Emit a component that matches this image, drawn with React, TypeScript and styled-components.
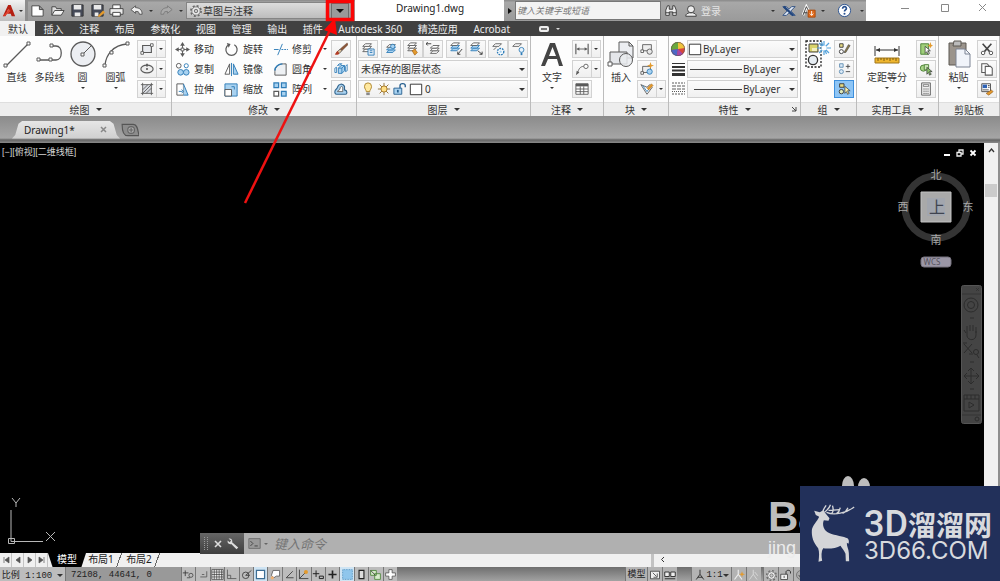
import React from "react";
import styled, { createGlobalStyle, css } from "styled-components";

const GlobalStyle = createGlobalStyle`
  * { box-sizing: border-box; }
  body {
    margin: 0;
    background: #000;
    font-family: "Noto Sans", "Noto Sans CJK SC", sans-serif;
    font-size: 10px;
    line-height: 14px;
    color: #333;
  }
  button, select, input { font: inherit; color: inherit; margin: 0; padding: 0; border: 0; background: none; }
  button { display: flex; align-items: center; justify-content: center; }
  svg { display: block; flex: none; }
`;

/* ---------- icons ---------- */

const G = "#5a5a5a";
const B = "#2f7db8";
const LB = "#a9d2f0";
const OR = "#e39a2d";

const sheet = (y: number, fill = "#fff", stroke = G) => (
  <path d={`M4 ${y + 3}L7 ${y}H14L11 ${y + 3}Z`} fill={fill} stroke={stroke} />
);
const sheets = (blue = false) => (
  <>
    {sheet(9, blue ? LB : "#fff", blue ? B : G)}
    {sheet(6, blue ? LB : "#fff", blue ? B : G)}
    {sheet(3, "#fff", G)}
  </>
);

const icons: Record<string, React.ReactNode> = {
  logo: <><path d="M1 14L7 1H10L15 14H11L10 11H6L9 8L7 6L4 14Z" fill="#b41f12" /><path d="M1 14L8 6L10 8L4 13Z" fill="#e2402c" /></>,
  fresh: <path d="M2 3H10L14 7V14H2ZM10 3V7H14" fill="#fff" stroke="#444" />,
  open: <><path d="M2 13V4H6L7 6H12V8" fill="#ddd" stroke="#444" /><path d="M2 13L5 8H15L12 13Z" fill="#f4f4f4" stroke="#444" /></>,
  save: <><path d="M2 2H14V14H2Z" fill="#454a58" stroke="#333" /><path d="M4 2H12V7H4ZM5 10H11V14H5Z" fill="#e9e9e9" /></>,
  saveas: <><path d="M2 2H14V14H2Z" fill="#454a58" stroke="#333" /><path d="M4 2H12V7H4ZM5 10H9V14H5Z" fill="#e9e9e9" /><path d="M8 14L14 8L16 10L10 15Z" fill={OR} /></>,
  print: <><path d="M4 2H12V7H4ZM4 10H12V14H4Z" fill="#fff" stroke="#444" /><path d="M1 6H15V12H1Z" fill="#ececec" stroke="#444" /><path d="M4 10H12V14H4Z" fill="#fff" stroke="#444" /></>,
  undo: <path d="M2 7L7 3V5C11 5 14 7 14 12H11C11 9 9 9 7 9V11Z" fill="#eee" stroke="#555" />,
  redo: <path d="M14 7L9 3V5C5 5 2 7 2 12H5C5 9 7 9 9 9V11Z" fill="#aaa" stroke="#7c7c7c" />,
  gear: <><circle cx="8" cy="8" r="5.800" fill="#eee" stroke="#6a6a6a" strokeWidth="2" strokeDasharray="2.300 2.255" /><circle cx="8" cy="8" r="4.800" fill="#eee" stroke="#666" /><circle cx="8" cy="8" r="2" fill="#ccc" stroke="#666" /></>,
  find: <><path d="M2 13V7L4 2H6V6H10V2H12L14 7V13H10V9H6V13Z" fill="#eee" stroke="#333" /><path d="M2 10H6M10 10H14" stroke="#333" /></>,
  user: <><path d="M2 14C2 11 4 11 6 10H10C12 11 14 11 14 14Z" fill="#eee" stroke="#333" /><circle cx="8" cy="6" r="4" fill="#eee" stroke="#333" /></>,
  exchange: <><path d="M1 3H5L8 6L11 3H15L10 8L15 13H11L8 10L5 13H1L6 8Z" fill="#e4ecf8" stroke="#24477d" /><path d="M2 3L13 13" stroke="#24477d" strokeWidth="2.5" /></>,
  connect: <><path d="M1 13L5 3L8 9" fill="none" stroke="#fff" strokeWidth="3" /><path d="M1 13L5 3L8 9M2 10H6" fill="none" stroke="#333" /><path d="M7 7H15V15H7Z" fill="#e06a1c" stroke="#a84808" /><path d="M11 8V13M9 11L11 13L13 11" stroke="#fff" fill="none" /></>,
  help: <><circle cx="8" cy="8" r="6.5" fill="#fff" stroke="#27508f" /><path d="M6 6C6 3 10.500 3.500 10 6C9.800 7.300 8 7.500 8 9" stroke="#27508f" fill="none" strokeWidth="1.800" /><circle cx="8" cy="11.500" r="1.100" fill="#27508f" /></>,
  rect: <><path d="M3 4H13V12H3Z" fill="#e8eaee" stroke={G} strokeWidth="1.300" /><path d="M1 11H4V14H1ZM12 2H15V5H12Z" fill="#fff" stroke={G} /></>,
  ellipse: <><ellipse cx="8" cy="8" rx="7" ry="4.500" fill="#eee" stroke={G} strokeWidth="1.300" /><circle cx="8" cy="8" r="1.200" fill={G} /><path d="M8 2V5" stroke={G} strokeWidth="2" /></>,
  hatch: <><path d="M3 3H13V13H3Z" fill="#d6d9df" /><path d="M3 1V15M13 1V15M1 3H15M1 13H15M3 9L9 3M3 13L13 3M7 13L13 7" stroke={G} /></>,
  move: <><path d="M8 3V13M3 8H13" stroke={G} /><path d="M8 0L10.500 4H5.500ZM8 16L10.500 12H5.500ZM0 8L4 5.500V10.500ZM16 8L12 5.500V10.500Z" fill={G} /><path d="M6.500 6.500H9.500V9.500H6.500Z" fill="#fff" stroke={G} /></>,
  rotate: <><path d="M5 3A6 6 0 1 0 11 3" fill="none" stroke={G} strokeWidth="1.300" /><path d="M3 1L7 2L5 6Z" fill={G} /></>,
  trim: <><path d="M1 8H6M9 8H11M12 8H14M15 8H16" stroke={B} /><path d="M5 14L10 2" stroke={B} /></>,
  copy: <><circle cx="4" cy="4" r="2.500" fill="#fff" stroke={G} /><circle cx="12" cy="4" r="2.200" fill="#fff" stroke={B} /><circle cx="6" cy="11" r="3" fill={LB} stroke={B} /><circle cx="12" cy="11" r="3" fill={LB} stroke={B} /></>,
  mirror: <><path d="M6 2V13H1Z" fill="#fff" stroke={G} /><path d="M10 2V13H15Z" fill={LB} stroke={B} /><path d="M8 1V15" stroke={B} /></>,
  fillet: <><path d="M2 14V10C2 5 6 2 11 2H14V14Z" fill="#eef1f4" stroke={G} /><path d="M2 9C2 5 6 2 10 2" fill="none" stroke={B} strokeWidth="1.500" /></>,
  stretch: <><path d="M2 2H9V14H2Z" fill="#fff" stroke={G} /><path d="M9 2L14 14H9" fill={LB} stroke={B} /><path d="M4 10H8M7 8L9 10L7 12" fill="none" stroke={B} /></>,
  scale: <><path d="M1 2H14V15H1Z" fill={LB} stroke={B} /><path d="M1 8H8V15H1Z" fill="#fff" stroke={G} /><path d="M8 5H11V8" fill="none" stroke={B} /></>,
  array: <><path d="M1 1H6V6H1ZM9 1H14V6H9ZM9 10H14V15H9Z" fill={LB} stroke={B} strokeWidth="1.300" /><path d="M1 10H6V15H1Z" fill="#fff" stroke={G} strokeWidth="1.300" /></>,
  erase: <><path d="M15 1L7 8L9 10L16 3Z" fill="#8b5638" stroke="#5b3824" strokeWidth=".5" /><path d="M7 8L9 10L6 13L3 12Z" fill="#dfc29b" stroke={G} /><path d="M1 14L4 10L6 13C5 15 2 15 1 14Z" fill="#b33a23" /></>,
  explode: <><path d="M5 7L8 4H12V10L9 13H5Z" fill={LB} stroke={B} /><path d="M5 7H9V13M9 7L12 4" stroke={B} fill="none" /><path d="M1 7L3 6V12H1ZM13 5L15 3V10L13 11ZM4 4L6 2H9L8 3Z" fill="#fff" stroke={B} /></>,
  offset: <><path d="M1 11C1 8 4 8 4 6C5 2 10 1 12 5V9C16 10 15 14 13 14H3C1 14 1 12 1 11Z" fill={LB} stroke="#33668f" strokeWidth="1.300" /><path d="M4 11C4 9 7 10 7 7C7 5 10 4 10 7V11Z" fill="#fff" stroke={G} /></>,
  layerProps: <><g transform="translate(-2 -1)">{sheets()}</g><path d="M8 8H15V15H8Z" fill="#dfeaf5" stroke={B} /><path d="M10 10H13M10 12H13" stroke={B} /></>,
  layerMatch: <><g transform="translate(-1 0)">{sheets(true)}</g><circle cx="10" cy="5" r="2.500" fill={LB} stroke={B} /></>,
  layerPaint: <><g transform="translate(-2 -2)">{sheets()}</g><path d="M7 10L10 8L13 12L10 15Z" fill={OR} stroke="#9b5a12" strokeWidth=".7" /></>,
  layerPrev: <><g transform="translate(1 1)">{sheets()}</g><path d="M0 2H6M2 0L0 2L2 4" fill="none" stroke="#333" /></>,
  layerIso: <><g transform="translate(-2 -2)">{sheets(true)}</g><path d="M15 8L10 14M10 11V14H13" stroke="#333" fill="none" /></>,
  layerUniso: <><g transform="translate(-2 -2)">{sheets(true)}</g><path d="M10 10L15 14M15 11V14H12" stroke="#333" fill="none" /></>,
  layerFreeze: <><g transform="translate(-2 -1)">{sheet(3)}</g><path d="M3 9L6 6" stroke={G} /><circle cx="11" cy="11" r="3.600" fill="#fff" stroke={B} strokeWidth="1.600" strokeDasharray="2 1" /><circle cx="11" cy="11" r="1.400" fill={LB} /></>,
  layerOff: <><g transform="translate(-2 -1)">{sheet(3)}</g><circle cx="12" cy="9" r="2.800" fill="#e8f3fc" stroke={B} /><path d="M11 12H13V15H11Z" fill={B} /></>,
  bulb: <><path d="M6 11C6 9 4 8 4 5A4 4 0 0 1 12 5C12 8 10 9 10 11Z" fill="#ffe9a0" stroke="#a77d20" /><path d="M6 12H10V15H6Z" fill="#888" /></>,
  sun: <><path d="M8 1V15M1 8H15M3 3L13 13M13 3L3 13" stroke="#8a6a2a" /><circle cx="8" cy="8" r="3.500" fill="#ffdf86" stroke="#a4731f" /></>,
  unlock: <><path d="M1 7H10V14H1Z" fill={LB} stroke="#245d8d" /><path d="M8 7V4C8 1 14 1 14 4V6" fill="none" stroke="#245d8d" strokeWidth="1.500" /><path d="M5.500 9V12" stroke="#245d8d" strokeWidth="2" /></>,
  swatch: <path d="M1.500 2.500H14.500V14.500H1.500Z" fill="#fff" stroke="#222" />,
  dim: <><path d="M1 2V14M15 2V14" stroke={G} strokeWidth="1.300" /><path d="M2 8H14" stroke={G} /><path d="M2 8L5 6V10ZM14 8L11 6V10Z" fill={G} /></>,
  leader: <><path d="M3 13C4 8 6 5 10 5" fill="none" stroke={G} /><path d="M1 15L2 10L5 12Z" fill={G} /><circle cx="12.500" cy="5" r="2.500" fill="#fff" stroke={G} /></>,
  table: <><path d="M1 2H15V14H1Z" fill="#fff" stroke={G} /><path d="M1 2H15V5H1Z" fill={G} /><path d="M1 8H15M1 11H15M6 5V14M10 5V14" stroke={G} /></>,
  blockCreate: <><path d="M3 3H13V10H3Z" fill="#eee" stroke={G} /><circle cx="11" cy="11" r="3" fill="#e8e8e8" stroke={G} /><path d="M1 9H4V12H1Z" fill="#fff" stroke={G} /></>,
  blockEdit: <><path d="M3 5H12V12H3Z" fill="#eee" stroke={G} /><path d="M1 11H4V14H1Z" fill="#fff" stroke={G} /><circle cx="11" cy="11" r="3" fill={LB} stroke={B} /><path d="M12 0L13 3L16 4L13 5L12 8L11 5L8 4L11 3Z" fill={OR} /></>,
  blockAttr: <><path d="M1 3L8 14L14 6L11 3L8 6Z" fill="#fff" stroke={G} /><path d="M3 4L8 11L10 8" stroke={B} fill="none" /><path d="M8 7L13 2L15 4L10 9Z" fill={OR} stroke="#8d5f21" strokeWidth=".5" /></>,
  wheel: <><circle cx="8" cy="8" r="7" fill="#d8463a" /><path d="M8 8L1 9A7 7 0 0 1 8 1Z" fill="#6aa83d" /><path d="M8 8V1A7 7 0 0 1 15 7Z" fill="#f1c33c" /><path d="M8 8L1 9A7 7 0 0 0 7 15Z" fill="#4c67c6" /><path d="M8 8L7 15A7 7 0 0 0 13 13Z" fill="#a646a8" /><circle cx="8" cy="8" r="6.600" fill="none" stroke="#555" strokeWidth=".6" /></>,
  lineweight: <><path d="M2 2.500H15" stroke="#333" /><path d="M2 6H15M2 9.500H15" stroke="#333" strokeWidth="2" /><path d="M2 13.500H15" stroke="#333" strokeWidth="3" /></>,
  linetypes: <><path d="M2 2H15M2 13H15" stroke={G} strokeDasharray="2 1" /><path d="M2 5H15M2 8H15" stroke={G} strokeDasharray="4 1" /><path d="M2 10.500H15" stroke={G} strokeDasharray="1 1" /></>,
  groupEdit: <><path d="M3 2H7V6H3Z" fill="#e8dc83" stroke="#333" /><circle cx="5" cy="11" r="2.300" fill="#fff" stroke="#333" /><path d="M8 12L13 3L15 4L10 12Z" fill="#8b7c4c" stroke="#333" strokeWidth=".6" /></>,
  groupAdd: <><path d="M3 2H7V6H3Z" fill="#dbeaf7" stroke="#5c8ab0" /><circle cx="5" cy="11" r="2.300" fill="#dbeaf7" stroke="#5c8ab0" /><path d="M10 5H15M12.500 2.500V7.500M10 11H15" stroke="#444" /></>,
  groupSel: <><path d="M3 2H8V6H3Z" fill="#e8dc83" stroke="#333" /><circle cx="5" cy="11" r="2.500" fill="#dfe9b9" stroke="#333" /><path d="M9 5V13L11 11L12 14L14 13L12 10H15Z" fill="#fff3aa" stroke="#333" strokeWidth=".8" /></>,
  quickSel: <><path d="M2 2H11V14H2Z" fill="#9fcf7a" stroke="#457c2e" /><path d="M7 5V13L9 11L10 14L12 13L10 10H13Z" fill="#fff" stroke="#333" strokeWidth=".8" /><path d="M13 0L14 3L16 4L14 5L13 7L12 5L10 4L12 3Z" fill={OR} /></>,
  selectAll: <><circle cx="5" cy="7" r="3.500" fill="#a8d488" stroke="#457c2e" /><path d="M6 3H11V9H6Z" fill="#cce7b7" stroke="#457c2e" /><path d="M9 6V14L11 12L12 15L14 14L12 11H15Z" fill="#8bc26a" stroke="#333" strokeWidth=".8" /></>,
  calc: <><path d="M3 1H13V15H3Z" fill="#eee" stroke={G} /><path d="M5 3H11V5H5Z" fill="#fff" stroke={G} strokeWidth=".8" /><path d="M5 8H11M5 10.500H11M5 13H11" stroke={G} strokeDasharray="1.500 .8" /></>,
  cut: <><path d="M3 2L11 11M13 2L5 11" stroke="#444" strokeWidth="1.800" /><circle cx="3.500" cy="12.500" r="2" fill="#fff" stroke="#444" /><circle cx="12.500" cy="12.500" r="2" fill="#fff" stroke="#444" /></>,
  copyDoc: <><path d="M2 2H8L10 4V12H2Z" fill="#fff" stroke={G} strokeWidth="1.200" /><path d="M6 5H12L14 7V15H6Z" fill="#fff" stroke={G} strokeWidth="1.200" /></>,
  matchProp: <><path d="M2 2H12V11H2Z" fill="#fff" stroke="#444" /><path d="M3 3H8V7H3Z" fill="#2e62b5" /><path d="M9 4H11M9 6H11M3 9H10" stroke="#444" /><path d="M7 13L13 9L15 11L10 15Z" fill={OR} stroke="#824d15" strokeWidth=".6" /></>,
  wrench: <path d="M3 2C6 1 8 4 7 6L14 12L12 14L6 8C3 9 1 6 2 4L4 6L6 4Z" fill="#ddd" />,
  prompt: <><path d="M1 2H15V14H1Z" fill="#999" stroke="#666" /><path d="M3 5L6 8L3 11M8 11H12" stroke="#333" fill="none" /></>,
  /* status bar toggles */
  infer: <><path d="M4 3V10M1 6H8" stroke="#333" /><circle cx="11" cy="9" r="2.500" fill="none" stroke="#444" /><path d="M6 12H10" stroke="#444" /></>,
  snap: <path d="M4 11H12V4M6 8H9" stroke="#555" fill="none" />,
  grid: <path d="M1 2H15V14H1ZM4 2V14M7 2V14M10 2V14M13 2V14M1 5H15M1 8H15M1 11H15" stroke="#333" fill="#eee" strokeWidth=".8" />,
  ortho: <path d="M3 2V13H14M3 9H7V13" stroke="#555" fill="none" />,
  polar: <><circle cx="7" cy="9" r="4" fill="none" stroke="#333" /><path d="M7 9L14 3M7 9H12" stroke="#333" /></>,
  osnap: <path d="M3 3H13V13H3Z" fill="#fff" stroke="#3d6e94" strokeWidth="1.500" />,
  osnap3: <><path d="M5 3H13V10H9L6 12L3 9Z" fill="#fff" stroke="#555" /><circle cx="4" cy="12" r="2" fill="#f1b171" /></>,
  otrack: <path d="M12 4L4 12H13" stroke="#333" fill="none" />,
  ducs: <><path d="M3 2V13H14M3 13L11 5" stroke="#333" fill="none" /><circle cx="11" cy="5" r="2.500" fill={OR} /></>,
  dyn: <path d="M5 3V11M1 7H9M9 10H14V13H9Z" stroke="#222" fill="none" strokeWidth="1.200" />,
  lwt: <path d="M8 3V13M3 8H13" stroke="#222" strokeWidth="2" />,
  transp: <path d="M2 2H14V14H2Z" fill="#8fc6ec" stroke="#3b83b5" strokeDasharray="1 1" />,
  quickProp: <path d="M5 3H11V13H5Z" fill="#ddd" stroke="#222" strokeWidth="1.400" />,
  cycling: <><path d="M2 3H9V9H2ZM7 7H14V14H7Z" fill="#d8ebcc" stroke="#458232" /><path d="M2 3L8 9" stroke="#333" /></>,
  monitor: <path d="M6 2H10V6H14V10H10V14H6V10H2V6H6Z" fill="#fff" stroke="#555" />,
  layout: <><path d="M2 3H14V13H2Z" fill="#eee" stroke="#333" /><path d="M5 5L10 10M6 11H11V6" stroke="#333" fill="none" /></>,
  views: <path d="M1 4H7V10H1ZM9 4H15V10H9ZM1 13H15" fill="#eee" stroke="#333" strokeWidth="1.300" />,
  person: <path d="M8 1V7L3 14M8 7L13 14M5 11H11" stroke="#333" fill="none" strokeWidth="1.300" />,
  personAuto: <><path d="M7 1V7L2 14M7 7L12 14" stroke="#eee" fill="none" strokeWidth="1.500" /><path d="M12 3L13 6L16 7L13 8L12 11L11 8L8 7L11 6Z" fill={OR} /></>,
  bolt: <path d="M7 1V7L2 14M7 7L12 14M9 4L13 9" stroke="#e2e2e2" fill="none" />,
  lock: <><path d="M1 7H10V14H1Z" fill="#eee" stroke="#333" /><path d="M8 7V4C8 1 14 1 14 4V6" fill="none" stroke="#333" strokeWidth="1.300" /><path d="M5.500 9V12" stroke="#333" /></>,
  target: <><circle cx="8" cy="8" r="6" fill="#aaa" stroke="#666" /><path d="M5 8L7 11L12 5" stroke="#333" fill="none" /></>,
  newTab: <><path d="M1 3H11C15 3 15 9 16 13H6C2 13 1 8 1 3Z" fill="#8c8c8c" stroke="#555" /><circle cx="9" cy="8" r="3" fill="#aaa" stroke="#666" /><path d="M7 8H11M9 6V10" stroke="#666" /></>,
};

const Icon = ({ name, size = 14 }: { name: string; size?: number }) => (
  <svg width={size} height={size} viewBox="0 0 16 16" fill="none" aria-hidden="true">{icons[name]}</svg>
);

const bigIcons: Record<string, React.ReactNode> = {
  line: <><path d="M3 26L25 4" stroke={G} strokeWidth="1.300" /><path d="M1 24H4V27H1ZM24 2H27V5H24Z" fill="#fff" stroke={G} /></>,
  pline: <><path d="M16 6H20C27 6 27 20 20 20H3" stroke={G} strokeWidth="1.300" /><path d="M14 4H17V7H14ZM1 18H4V21H1ZM13 18H16V21H13Z" fill="#fff" stroke={G} /></>,
  circle: <><circle cx="14" cy="14" r="12" fill="#eceef2" stroke={G} strokeWidth="1.300" /><path d="M14 14L22 6" stroke={G} /><path d="M12 13H15V16H12Z" fill="#fff" stroke={G} /></>,
  arc: <><path d="M3 25C4 15 11 5 25 4" stroke={G} strokeWidth="1.300" /><path d="M1 24H4V27H1ZM8 11H11V14H8ZM24 2H27V5H24Z" fill="#fff" stroke={G} /></>,
  text: <path d="M3 26L12 3H17L25 26H21L19 19H10L7 26ZM11 16H18L14.500 7Z" fill="#444" fillRule="evenodd" />,
  insert: <><path d="M12 2H22L26 6V18H12Z" fill="#eceef2" stroke={G} /><path d="M22 2V6H26" stroke={G} /><path d="M3 12H20V24H3Z" fill="#e4e6ea" stroke={G} /><circle cx="19" cy="20" r="6.500" fill="#e9ebef" fillOpacity=".85" stroke={G} /><path d="M1 22H5V26H1Z" fill="#fff" stroke={G} /></>,
  group: <><path d="M2 1H17V27H2Z" stroke="#222" strokeDasharray="2 1.500" strokeWidth="1.300" /><path d="M5 4H14V12H5Z" fill="#d9d36b" stroke="#444" /><path d="M8 8H13V11H8Z" fill="#f3f0c0" /><circle cx="9" cy="20" r="4.600" fill="#e6edf3" stroke="#333" strokeWidth="1.300" /><path d="M20 1V15M13 8H27M15 3L25 13M25 3L15 13M17.500 2L22.500 14" stroke="#54a3dc" strokeWidth="1.200" /><circle cx="20" cy="8" r="2.500" fill="#fff" /></>,
  measure: <><path d="M2 6V16M26 6V16M3 10H25" stroke="#333" /><path d="M3 10L7 8V12ZM25 10L21 8V12Z" fill="#333" /><path d="M2 18H26V23H2Z" fill="#eeb52e" stroke="#a0761a" /><path d="M5 18V21M8 18V20M11 18V21M14 18V20M17 18V21M20 18V20M23 18V21" stroke="#7d5c12" /></>,
  paste: <><path d="M4 3H21V25H4Z" fill="#9b948c" stroke="#5d5853" /><path d="M9 1H16V6H8Z" fill="#bbb" stroke="#5d5853" /><path d="M11 9H20L25 14V27H11Z" fill="#f1f4fa" stroke="#7c8494" /><path d="M20 9V14H25" stroke="#7c8494" /></>,
};
const BigIcon = ({ name }: { name: string }) => (
  <svg width="28" height="28" viewBox="0 0 28 28" fill="none" aria-hidden="true">{bigIcons[name]}</svg>
);

const Caret = styled.i<{ $w?: number; $color?: string }>`
  display: block;
  flex: none;
  width: 0;
  height: 0;
  border: ${(p) => p.$w ?? 2}px solid transparent;
  border-bottom: 0;
  border-top-color: ${(p) => p.$color ?? "#333"};
`;

/* ---------- page frame ---------- */

const Page = styled.div`
  position: relative;
  display: flex;
  flex-direction: column;
  min-height: 100vh;
  overflow: hidden;
`;

const TitleBar = styled.header`
  display: flex;
  height: 21px;
  background: #fff;
`;
const AppButton = styled.button`
  width: 28px;
  gap: 3px;
  background: linear-gradient(#f2f2f2, #bdbdbd);
  border-right: 3px solid #8d8d8d;
`;
const barFill = css`background: linear-gradient(#8f8f8f 0 1px, #a8a8a8 2px, #9a9a9a);`;
const QuickAccess = styled.div`
  display: flex;
  width: 327px;
  ${barFill}
`;
const QuickTools = styled.div`
  display: flex;
  width: 158px;
`;
const QuickButton = styled.button`flex: 2;`;
const QuickMore = styled.button`flex: 1;`;
const Workspace = styled.label`
  display: flex;
  align-items: center;
  width: 143px;
  height: 17px;
  margin-top: 2px;
  padding-left: 2px;
  background: linear-gradient(#dcdcdc, #bdbdbd);
  border: 1px solid #848484;
`;
const PlainSelect = styled.select`
  appearance: none;
  flex: 1;
  min-width: 0;
  height: 16px;
  outline: none;
`;
const CustomizeButton = styled.button`
  width: 18px;
  height: 16px;
  margin: 3px 0 0 2px;
  background: #9a9a9a;
  border: 1px solid #6c6c6c;
`;
const DocTitle = styled.h1`
  flex: 1;
  margin: 0;
  padding-left: 1px;
  text-align: center;
  font-size: 10px;
  font-weight: 400;
  line-height: 16px;
  color: #222;
`;
const InfoCenter = styled.div`
  display: flex;
  align-items: center;
  width: 362px;
  padding-right: 2px;
  ${barFill}
`;
const InfoButton = styled.button<{ $w: number }>`
  width: ${(p) => p.$w}px;
  height: 20px;
`;
const SearchBox = styled.input`
  width: 146px;
  height: 19px;
  padding-left: 1px;
  font-size: 9px;
  background: #f3f3f3;
  border: 1px solid #777;
  &::placeholder { color: #777; font-style: italic; opacity: 1; }
`;
const SignIn = styled.a`
  flex: 1;
  padding-left: 1px;
  color: #e4e4e4;
  text-decoration: none;
`;
const WindowControls = styled.div`
  display: flex;
  align-items: center;
  width: 134px;
  padding: 0 13px 6px 34px;
  justify-content: space-between;
  color: #888;
`;

const TabBar = styled.nav`
  display: flex;
  align-items: center;
  height: 15px;
  background: #414141;
`;
const TabList = styled.div`
  display: flex;
  justify-content: space-between;
  width: 517px;
  height: 15px;
`;
const Tab = styled.a<{ $active?: boolean }>`
  padding: 0 7px 0 8px;
  line-height: 16px;
  white-space: nowrap;
  text-decoration: none;
  color: ${(p) => (p.$active ? "#333" : "#ededed")};
  background: ${(p) => (p.$active ? "#f1f1f1" : "none")};
`;
const RibbonToggle = styled.button`
  gap: 7px;
  margin-left: 22px;
`;
const TogglePill = styled.span`
  width: 10px;
  height: 6px;
  border: 2px solid #eee;
  border-radius: 2px;
  background: #777;
`;

/* ---------- ribbon ---------- */

const Ribbon = styled.section`
  display: grid;
  grid-template-columns: 172fr 185fr 174fr 73fr 65fr 132fr 56fr 82fr 61fr;
  height: 80px;
  background: #fdfdfd;
`;
const PanelBox = styled.section`
  display: flex;
  flex-direction: column;
  border-right: 1px solid #bcbcbc;
  min-width: 0;
`;
const PanelBody = styled.div<{ $wide?: boolean }>`
  display: flex;
  flex: 1;
  justify-content: space-between;
  padding: 4px ${(p) => (p.$wide ? 5 : 2)}px 0 ${(p) => (p.$wide ? 0 : 1)}px;
`;
const PanelTitle = styled.h2`
  display: flex;
  align-items: center;
  justify-content: center;
  gap: 6px;
  position: relative;
  height: 14px;
  margin: 0;
  font-size: 10px;
  font-weight: 400;
  line-height: 12px;
  background: #ededed;
  border-top: 1px solid #dedede;
`;
const Launcher = styled.button`
  position: absolute;
  right: 3px;
  top: 3px;
`;
const Panel = ({ title, caret = true, launcher, wide, children }: {
  title: string; caret?: boolean; launcher?: boolean; wide?: boolean; children: React.ReactNode;
}) => (
  <PanelBox>
    <PanelBody $wide={wide}>{children}</PanelBody>
    <PanelTitle>
      {title}
      {caret && <Caret $w={3} />}
      {launcher && (
        <Launcher aria-label={title}>
          <svg width="6" height="6" viewBox="0 0 6 6" fill="none"><path d="M1 1L5 5M5 1V5H1" stroke="#444" /></svg>
        </Launcher>
      )}
    </PanelTitle>
  </PanelBox>
);

const BigRow = styled.div`display: flex;`;
const BigButtonBox = styled.button<{ $w: number }>`
  flex-direction: column;
  justify-content: flex-start;
  width: ${(p) => p.$w}px;
  white-space: nowrap;
`;
const BigLabel = styled.span`
  margin: 2px 0;
  line-height: 15px;
`;
const Big = ({ icon, label, caret, w = 33 }: { icon: string; label: string; caret?: boolean; w?: number }) => (
  <BigButtonBox $w={w}>
    <BigIcon name={icon} />
    <BigLabel>{label}</BigLabel>
    {caret && <Caret />}
  </BigButtonBox>
);

const Stack = styled.div`
  display: flex;
  flex-direction: column;
  gap: 2px;
`;
const Group = styled.div`display: flex;`;
const SmallButton = styled.button<{ $active?: boolean }>`
  width: 20px;
  height: 18px;
  background: ${(p) => (p.$active ? "#8ec5f5" : "linear-gradient(#fbfbfb, #efefef)")};
  border: 1px solid ${(p) => (p.$active ? "#3d8fdc" : "#d2d2d2")};
`;
const SplitArrow = styled(SmallButton)`
  width: 9px;
  border-left: 0;
`;
const Small = ({ icon, split, active }: { icon: string; split?: boolean; active?: boolean }) => (
  <Group>
    <SmallButton aria-label={icon} $active={active}><Icon name={icon} /></SmallButton>
    {split && <SplitArrow aria-label={`${icon} menu`}><Caret /></SplitArrow>}
  </Group>
);

const ModifyGrid = styled.div`
  display: grid;
  grid-template-columns: 49px 49px 54px;
  grid-template-rows: repeat(3, 18px);
  row-gap: 2px;
  padding-left: 3px;
`;
const ToolButton = styled.button`
  justify-content: flex-start;
  gap: 4px;
  white-space: nowrap;
`;
const ToolCaret = styled.span`margin-left: auto;`;

const LayerBody = styled.div`
  display: flex;
  flex: 1;
  flex-direction: column;
  gap: 2px;
`;
const LayerRow = styled.div`
  display: flex;
  justify-content: space-between;
`;
const Combo = styled.label`
  display: flex;
  flex: 1;
  align-items: center;
  gap: 2px;
  height: 18px;
  max-height: 18px;
  padding: 0 2px 0 2px;
  background: linear-gradient(#fbfbfb, #f0f0f0);
  border: 1px solid #d0d0d0;
`;
const PropRow = styled.div`
  display: flex;
  align-items: center;
  gap: 1px;
  height: 18px;
`;
const PropCombo = styled(Combo)`
  gap: 1px;
  padding-left: 0;
`;
const PropSelect = styled(PlainSelect)<{ $end?: boolean }>`
  flex: ${(p) => (p.$end ? "0 0 45px" : "1")};
`;
const LineSample = styled.span<{ $short?: boolean }>`
  flex: 1;
  height: 1px;
  margin-left: ${(p) => (p.$short ? 6 : 2)}px;
  background: #444;
`;

/* ---------- document area ---------- */

const FileTabs = styled.nav`
  display: flex;
  align-items: center;
  height: 27px;
  padding-left: 12px;
  gap: 1px;
  background: linear-gradient(#8b8b8b, #a5a5a5 22px, #666 24px, #8a8a8a);
`;
const FileTab = styled.div`
  display: flex;
  align-items: center;
  justify-content: space-between;
  width: 108px;
  height: 18px;
  padding: 0 13px 0 12px;
  background: linear-gradient(#e6e6e6, #cfcfcf);
  clip-path: polygon(0 100%, 3% 80%, 6% 18%, 10% 0, 90% 0, 94% 18%, 97% 80%, 100% 100%);
`;
const FileLink = styled.a`
  color: #222;
  text-decoration: none;
`;

const Workarea = styled.main`
  position: relative;
  display: flex;
  flex: 1;
  min-height: 300px;
  background: #000;
`;
const Model = styled.div`
  position: relative;
  flex: 1;
`;
const ViewLabel = styled.div`
  padding: 2px 2px;
  font-family: "Liberation Sans", "Noto Sans CJK SC", sans-serif;
  font-size: 9px;
  color: #d4d4d4;
`;
const DocControls = styled.div`
  position: absolute;
  right: 7px;
  top: 6px;
  display: flex;
  gap: 5px;
`;
const ViewCube = styled.svg`
  position: absolute;
  right: 10px;
  top: 22px;
`;
const NavBar = styled.svg`
  position: absolute;
  right: 2px;
  top: 142px;
`;
const Ucs = styled.svg`
  position: absolute;
  left: 5px;
  bottom: 4px;
`;
const VScroll = styled.div`
  display: flex;
  flex-direction: column;
  align-items: center;
  width: 16px;
  padding-top: 5px;
  background: #f0f0f0;
  border-right: 2px solid #8e8e8e;
`;
const VThumb = styled.div`
  width: 12px;
  height: 13px;
  margin-top: 31px;
  background: #cbcbcb;
`;
const CommandLine = styled.form`
  position: absolute;
  left: 200px;
  right: 16px;
  bottom: -1px;
  display: flex;
  height: 21px;
  background: #b0b0b0;
`;
const CommandGrip = styled.div`
  display: flex;
  align-items: center;
  justify-content: space-between;
  width: 44px;
  padding: 0 4px 0 3px;
  background: linear-gradient(#666, #3e3e3e);
`;
const CommandInput = styled.input`
  flex: 1;
  padding-left: 6px;
  font-size: 13px;
  font-style: italic;
  outline: none;
  &::placeholder { color: #757575; opacity: 1; }
`;
const CommandPrompt = styled.button`
  gap: 3px;
  padding-left: 4px;
`;

const LayoutBar = styled.div`
  display: flex;
  height: 14px;
  background: #f0f0f0;
`;
const LayoutNav = styled.button`
  width: 12px;
  border-right: 1px solid #c4c4c4;
`;
const LayoutTab = styled.a<{ $active?: boolean }>`
  width: 38px;
  padding-right: ${(p) => (p.$active ? 0 : 8)}px;
  text-align: center;
  white-space: nowrap;
  line-height: 13px;
  text-decoration: none;
  color: ${(p) => (p.$active ? "#fff" : "#222")};
  background: ${(p) => (p.$active ? "#000" : "linear-gradient(110deg, transparent 33px, #666 33px 34px, transparent 34px)")};
  clip-path: ${(p) => (p.$active ? "polygon(0 0, 100% 0, 88% 100%, 12% 100%)" : "none")};
`;
const HScroll = styled.div`
  width: 349px;
  margin-left: auto;
  padding-left: 6px;
  border-left: 3px solid #c2c2c2;
  line-height: 12px;
`;

const StatusBar = styled.footer`
  display: flex;
  height: 14px;
  background: linear-gradient(#6e6e6e, #a2a2a2);
  font-family: "Liberation Mono", "Noto Sans CJK SC", monospace;
  font-size: 9px;
  color: #222;
`;
const Scale = styled.button`
  width: 66px;
  gap: 5px;
  padding-top: 3px;
  background: #bdbdbd;
  border-right: 1px solid #777;
  white-space: nowrap;
`;
const Coords = styled.output`
  width: 115px;
  padding-left: 5px;
  line-height: 16px;
  white-space: pre;
  background: #999;
`;
const Toggles = styled.div`
  display: flex;
  width: 216px;
`;
const Toggle = styled.button<{ $on?: boolean }>`
  flex: 1;
  background: ${(p) => (p.$on ? "#cfe4f3" : "#bcbcbc")};
  border-left: 1px solid #777;
`;
const StatusRight = styled.div`
  display: flex;
  width: 375px;
  margin-left: auto;
`;
const StatusButton = styled.button<{ $w?: number; $ml?: number }>`
  width: ${(p) => p.$w ?? 15}px;
  margin-left: ${(p) => p.$ml ?? 0}px;
  padding-top: 2px;
  background: #b3b3b3;
  border-left: 1px solid #777;
`;

/* ---------- overlays ---------- */

const Annotation = styled.svg`
  position: absolute;
  left: 240px;
  top: 0;
  pointer-events: none;
`;
const Watermark = styled.div`
  position: absolute;
  right: 130px;
  bottom: 22px;
  width: 102px;
  font-family: "Liberation Sans", sans-serif;
  color: #bdbdbd;
`;
const Paw = styled.svg`
  margin-left: 72px;
`;
const WaterName = styled.div`
  font-size: 42px;
  font-weight: 700;
  line-height: 40px;
`;
const WaterSite = styled.div`
  font-size: 18px;
  line-height: 22px;
  color: #ececec;
`;
const Brand = styled.aside`
  position: absolute;
  right: 0;
  bottom: 0;
  display: flex;
  gap: 8px;
  width: 200px;
  height: 95px;
  padding: 17px 8px 0 9px;
  background: #22305a;
  color: #d8dade;
`;
const BrandText = styled.div`
  padding-top: 4px;
  white-space: nowrap;
`;
const BrandName = styled.div`
  display: flex;
  align-items: center;
  height: 34px;
  font-family: "Noto Sans CJK SC", sans-serif;
  font-size: 28px;
  font-weight: 700;
  line-height: 34px;
`;
const BrandLatin = styled.span`
  font-family: Roboto, "Liberation Sans", sans-serif;
  font-size: 36px;
  font-weight: 500;
`;
const BrandSite = styled.div`
  font-family: Inter, sans-serif;
  font-size: 24px;
  line-height: 20px;
`;

const tabs = ["默认", "插入", "注释", "布局", "参数化", "视图", "管理", "输出", "插件", "Autodesk 360", "精选应用", "Acrobat"];
const modifyTools = [
  ["move", "移动"], ["rotate", "旋转"], ["trim", "修剪"],
  ["copy", "复制"], ["mirror", "镜像"], ["fillet", "圆角"],
  ["stretch", "拉伸"], ["scale", "缩放"], ["array", "阵列"],
];
const toggles = ["infer", "snap", "grid", "ortho", "polar", "osnap", "osnap3", "otrack", "ducs", "dyn", "lwt", "transp", "quickProp", "cycling", "monitor"];
const activeToggles = ["osnap", "transp"];

export default function App() {
  return (
    <Page>
      <GlobalStyle />
      <TitleBar>
        <AppButton aria-label="menu"><Icon name="logo" size={14} /><Caret /></AppButton>
        <QuickAccess>
          <QuickTools>
            {["fresh", "open", "save", "saveas", "print", "undo"].map((n) => (
              <QuickButton key={n} aria-label={n}><Icon name={n} size={15} /></QuickButton>
            ))}
            <QuickMore aria-label="undo list"><Caret /></QuickMore>
            <QuickButton aria-label="redo"><Icon name="redo" size={15} /></QuickButton>
            <QuickMore aria-label="redo list"><Caret /></QuickMore>
          </QuickTools>
          <Workspace>
            <Icon name="gear" />
            <PlainSelect aria-label="workspace"><option>草图与注释</option></PlainSelect>
          </Workspace>
          <CustomizeButton aria-label="customize"><Caret $w={4} $color="#111" /></CustomizeButton>
        </QuickAccess>
        <DocTitle>Drawing1.dwg</DocTitle>
        <InfoCenter>
          <InfoButton $w={11} aria-label="expand">
            <svg width="4" height="6" viewBox="0 0 4 6"><path d="M0 0L4 3L0 6Z" fill="#111" /></svg>
          </InfoButton>
          <SearchBox aria-label="search" placeholder="键入关键字或短语" />
          <InfoButton $w={20} aria-label="find"><Icon name="find" /></InfoButton>
          <InfoButton $w={19} aria-label="account"><Icon name="user" /></InfoButton>
          <SignIn href="#">登录</SignIn>
          <InfoButton $w={10} aria-label="account menu"><Caret /></InfoButton>
          <InfoButton $w={22} aria-label="exchange"><Icon name="exchange" /></InfoButton>
          <InfoButton $w={18} aria-label="connect"><Icon name="connect" /></InfoButton>
          <InfoButton $w={10} aria-label="connect menu"><Caret /></InfoButton>
          <InfoButton $w={32} aria-label="help"><Icon name="help" size={15} /></InfoButton>
          <Caret />
        </InfoCenter>
        <WindowControls>
          <button aria-label="minimize"><svg width="10" height="10"><path d="M1 5.500H9" stroke="#888" /></svg></button>
          <button aria-label="maximize"><svg width="9" height="9"><path d="M1.500 1.500H8.500V8.500H1.500Z" stroke="#888" fill="none" /></svg></button>
          <button aria-label="close"><svg width="9" height="9"><path d="M1 1L8 8M8 1L1 8" stroke="#888" /></svg></button>
        </WindowControls>
      </TitleBar>

      <TabBar>
        <TabList>
          {tabs.map((t, i) => <Tab key={t} href="#" $active={i === 0}>{t}</Tab>)}
        </TabList>
        <RibbonToggle aria-label="ribbon display"><TogglePill /><Caret $color="#ddd" /></RibbonToggle>
      </TabBar>

      <Ribbon>
        <Panel title="绘图" wide>
          <BigRow>
            <Big icon="line" label="直线" />
            <Big icon="pline" label="多段线" />
            <Big icon="circle" label="圆" caret />
            <Big icon="arc" label="圆弧" caret />
          </BigRow>
          <Stack>
            <Small icon="rect" split />
            <Small icon="ellipse" split />
            <Small icon="hatch" split />
          </Stack>
        </Panel>
        <Panel title="修改" wide>
          <ModifyGrid>
            {modifyTools.map(([icon, label], i) => (
              <ToolButton key={icon}>
                <Icon name={icon} size={15} />{label}
                {i % 3 === 2 && <ToolCaret><Caret /></ToolCaret>}
              </ToolButton>
            ))}
          </ModifyGrid>
          <Stack>
            <Small icon="erase" />
            <Small icon="explode" />
            <Small icon="offset" />
          </Stack>
        </Panel>
        <Panel title="图层">
          <LayerBody>
            <LayerRow>
              <Small icon="layerProps" />
              <Small icon="layerMatch" />
              <Group><Small icon="layerPaint" /><Small icon="layerPrev" /></Group>
              <Group><Small icon="layerIso" /><Small icon="layerUniso" /></Group>
              <Group><Small icon="layerFreeze" /><Small icon="layerOff" /></Group>
            </LayerRow>
            <Combo>
              <PlainSelect aria-label="layer state"><option>未保存的图层状态</option></PlainSelect>
              <Caret $w={3} />
            </Combo>
            <Combo>
              <Icon name="bulb" /><Icon name="sun" /><Icon name="unlock" /><Icon name="swatch" />
              <PlainSelect aria-label="layer"><option>0</option></PlainSelect>
              <Caret $w={3} />
            </Combo>
          </LayerBody>
        </Panel>
        <Panel title="注释">
          <Big icon="text" label="文字" caret w={40} />
          <Stack>
            <Small icon="dim" split />
            <Small icon="leader" split />
            <Small icon="table" />
          </Stack>
        </Panel>
        <Panel title="块">
          <Big icon="insert" label="插入" w={32} />
          <Stack>
            <Small icon="blockCreate" />
            <Small icon="blockEdit" />
            <Small icon="blockAttr" split />
          </Stack>
        </Panel>
        <Panel title="特性" launcher>
          <LayerBody>
            <PropRow>
              <Icon name="wheel" size={16} />
              <PropCombo>
                <Icon name="swatch" />
                <PropSelect aria-label="color"><option>ByLayer</option></PropSelect>
                <Caret $w={3} />
              </PropCombo>
            </PropRow>
            <PropRow>
              <Icon name="lineweight" size={16} />
              <PropCombo>
                <LineSample />
                <PropSelect $end aria-label="lineweight"><option>ByLayer</option></PropSelect>
                <Caret $w={3} />
              </PropCombo>
            </PropRow>
            <PropRow>
              <Icon name="linetypes" size={16} />
              <PropCombo>
                <LineSample $short />
                <PropSelect $end aria-label="linetype"><option>ByLayer</option></PropSelect>
                <Caret $w={3} />
              </PropCombo>
            </PropRow>
          </LayerBody>
        </Panel>
        <Panel title="组">
          <Big icon="group" label="组" w={32} />
          <Stack>
            <Small icon="groupEdit" />
            <Small icon="groupAdd" />
            <Small icon="groupSel" active />
          </Stack>
        </Panel>
        <Panel title="实用工具">
          <Big icon="measure" label="定距等分" caret w={58} />
          <Stack>
            <Small icon="quickSel" />
            <Small icon="selectAll" />
            <Small icon="calc" />
          </Stack>
        </Panel>
        <Panel title="剪贴板" caret={false}>
          <Big icon="paste" label="粘贴" caret w={38} />
          <Stack>
            <Small icon="cut" />
            <Small icon="copyDoc" />
            <Small icon="matchProp" />
          </Stack>
        </Panel>
      </Ribbon>

      <FileTabs>
        <FileTab>
          <FileLink href="#">Drawing1*</FileLink>
          <button aria-label="close tab"><svg width="7" height="7"><path d="M1 1L6 6M6 1L1 6" stroke="#888" strokeWidth="1.500" /></svg></button>
        </FileTab>
        <button aria-label="new tab"><Icon name="newTab" size={18} /></button>
      </FileTabs>

      <Workarea>
        <Model>
          <ViewLabel>[−][俯视][二维线框]</ViewLabel>
          <DocControls>
            <button aria-label="minimize drawing"><svg width="8" height="8"><path d="M1 6H7" stroke="#fff" strokeWidth="2" /></svg></button>
            <button aria-label="restore drawing"><svg width="8" height="8"><path d="M1 3.500H5V7H1ZM3 3V1H7V5H5" stroke="#eee" fill="none" strokeWidth="1.300" /></svg></button>
            <button aria-label="close drawing"><svg width="8" height="8"><path d="M1.500 1.500L6.500 6.500M6.500 1.500L1.500 6.500" stroke="#fff" strokeWidth="1.800" /></svg></button>
          </DocControls>
          <ViewCube width="78" height="106" viewBox="0 0 78 106" fontSize="11" textAnchor="middle" fill="#a8a8a8">
            <circle cx="40" cy="42" r="31" fill="none" stroke="#343434" strokeWidth="7" />
            <path d="M25 27H55V57H25Z" fill="#a9a9a9" stroke="#c2c2c2" />
            <path d="M31 33H49V51H31Z" fill="#a2a6ae" />
            <text x="41" y="48" fontSize="16" fill="#3f4450">上</text>
            <text x="40" y="14">北</text>
            <text x="40" y="79">南</text>
            <text x="7" y="46">西</text>
            <text x="72" y="46">东</text>
            <rect x="25" y="92" width="30" height="10" rx="3" fill="#9b97a6" stroke="#77737f" />
            <text x="36" y="100" fontSize="8" fill="#56535e">WCS</text>
          </ViewCube>
          <NavBar width="21" height="139" viewBox="0 0 21 139" fill="none" stroke="#2c2c2c">
            <rect x=".5" y=".5" width="20" height="138" rx="2" fill="#444" stroke="#555" />
            <path d="M15 3L18 6M18 3L15 6M1 9H20M1 130H20" strokeWidth=".6" />
            <circle cx="10" cy="20" r="7" /><circle cx="10" cy="20" r="3.500" />
            <path d="M9 33H13M9 77H13M9 104H13" />
            <path d="M5 48L3 45M6 47V41M9 46V40M12 46V40M15 48V42M6 47V51C7 56 15 56 15 50V46" />
            <path d="M3 59L11 68M11 59L3 68M2 58H6M8 69H12" /><circle cx="15" cy="67" r="2.500" /><path d="M16 70L18 73" />
            <path d="M10 83V99M3 91H18M7 86L10 83L13 86M7 96L10 99L13 96M6 88L3 91L6 94M15 88L18 91L15 94" />
            <path d="M3 110H18V126H3ZM3 114H18M6 110V114M10 110V114M14 110V114M8 117L13 120L8 123Z" />
            <circle cx="16" cy="134" r="2" />
          </NavBar>
          <Ucs width="52" height="54" viewBox="0 0 52 54" fill="none" stroke="#b8b8b8">
            <path d="M6 44V15M8 46.500H38M3.500 43.500H9.500V48.500H3.500ZM6 43V46.500H9" />
            <path d="M7 3L11 8M15 3L11 8V12M41 37L50 46M50 37L41 46" />
          </Ucs>
        </Model>
        <VScroll>
          <svg width="7" height="5"><path d="M1 4L3.500 1L6 4" stroke="#333" fill="none" strokeWidth="1.300" /></svg>
          <VThumb />
        </VScroll>
        <CommandLine>
          <CommandGrip>
            <svg width="6" height="14"><path d="M1.500 0V14M4.500 0V14" stroke="#999" strokeDasharray="1 1" /></svg>
            <svg width="8" height="8"><path d="M1 1L7 7M7 1L1 7" stroke="#ddd" strokeWidth="1.600" /></svg>
            <Icon name="wrench" />
          </CommandGrip>
          <CommandPrompt type="button" aria-label="recent commands"><Icon name="prompt" size={13} /><Caret $color="#666" /></CommandPrompt>
          <CommandInput aria-label="command" placeholder="键入命令" />
        </CommandLine>
      </Workarea>

      <LayoutBar>
        {["M2 1V7M7 1L3 4L7 7Z", "M6 1L2 4L6 7Z", "M2 1L6 4L2 7Z", "M1 1L5 4L1 7ZM6 1V7"].map((d) => (
          <LayoutNav key={d} aria-label="layout step"><svg width="8" height="8"><path d={d} fill="#555" stroke="#555" strokeWidth=".7" /></svg></LayoutNav>
        ))}
        <LayoutTab href="#" $active>模型</LayoutTab>
        <LayoutTab href="#">布局1</LayoutTab>
        <LayoutTab href="#">布局2</LayoutTab>
        <HScroll>
          <svg width="5" height="12"><path d="M4 4L1.500 6.500L4 9" stroke="#333" fill="none" /></svg>
        </HScroll>
      </LayoutBar>

      <StatusBar>
        <Scale>比例 1:100<Caret $w={3} /></Scale>
        <Coords>72108, 44641, 0</Coords>
        <Toggles>
          {toggles.map((t) => <Toggle key={t} aria-label={t} $on={activeToggles.includes(t)}><Icon name={t} size={13} /></Toggle>)}
        </Toggles>
        <StatusRight>
          <StatusButton $w={22}>模型</StatusButton>
          <StatusButton aria-label="layout"><Icon name="layout" size={12} /></StatusButton>
          <StatusButton aria-label="views"><Icon name="views" size={12} /></StatusButton>
          <StatusButton $w={40} $ml={14}><Icon name="person" size={12} />1:1<Caret $w={3} /></StatusButton>
          <StatusButton aria-label="annotation visibility"><Icon name="personAuto" size={12} /></StatusButton>
          <StatusButton aria-label="annotation auto scale"><Icon name="bolt" size={12} /></StatusButton>
          <StatusButton $ml={2} aria-label="settings"><Icon name="gear" size={13} /></StatusButton>
          <StatusButton aria-label="lock"><Icon name="lock" size={12} /></StatusButton>
          <StatusButton aria-label="isolate"><Icon name="target" size={12} /></StatusButton>
        </StatusRight>
      </StatusBar>

      <Watermark>
        <Paw width="30" height="22" viewBox="0 0 30 22"><ellipse cx="8" cy="11" rx="6" ry="10" fill="#bdbdbd" /><ellipse cx="24" cy="12" rx="6" ry="9" fill="#bdbdbd" /></Paw>
        <WaterName>Ba</WaterName>
        <WaterSite>jing</WaterSite>
      </Watermark>

      <Brand>
        <svg width="47" height="60" viewBox="180 130 140 180" fill="none">
          <path d="M195 153L212 158L222 152L230 162L241 176L238 183L224 182C218 195 224 214 240 220C258 228 285 230 295 236C300 241 300 247 298 252L293 249C292 260 299 268 299 280L300 305H290L289 282C285 272 279 266 274 258C262 266 240 268 222 266C216 275 216 290 219 303L208 306C210 290 211 278 207 266C192 248 187 232 188 212C190 196 204 186 210 171L200 166Z" fill="#d4d5d8" />
          <path d="M222 156C221 150 226 144 231 137M226 158C236 150 240 146 244 135M232 158C255 168 292 160 315 142M248 161C254 154 252 145 250 138M262 162C268 158 272 152 273 144M280 161C288 158 294 150 296 144M238 152C246 151 262 152 270 150" stroke="#d4d5d8" strokeWidth="4" />
        </svg>
        <BrandText>
          <BrandName><BrandLatin>3D</BrandLatin>溜溜网</BrandName>
          <BrandSite>3D66.COM</BrandSite>
        </BrandText>
      </Brand>

      <Annotation width="120" height="210" viewBox="240 0 120 210" fill="none">
        <rect x="327.500" y="1.500" width="25" height="18" stroke="#fb0505" strokeWidth="3.500" />
        <path d="M245 203L331 28" stroke="#ee1111" strokeWidth="2.500" />
        <path d="M335 18L324 30L337 35Z" fill="#fb0505" />
      </Annotation>
    </Page>
  );
}
